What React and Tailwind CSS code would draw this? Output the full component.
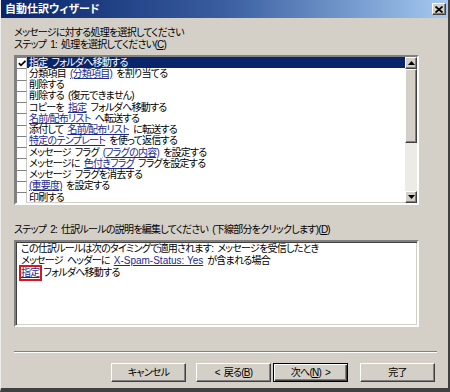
import React from 'react';

const raised =
  'border border-t-white border-l-white border-r-[#404040] border-b-[#404040] shadow-[inset_-1px_-1px_0_#808080] bg-[#d4d0c8]';
const sunken =
  'border-2 border-t-[#808080] border-l-[#808080] border-r-white border-b-white shadow-[inset_1px_1px_0_#404040,inset_-1px_-1px_0_#d4d0c8]';

const Link = ({ children, light, latin }) => (
  <span
    className={`underline underline-offset-1 ${light ? '' : 'text-[#1c2a8c]'} ${latin ? 'tracking-normal [word-spacing:0px]' : ''}`}
  >
    {children}
  </span>
);

const rules = [
  [<Link light key="a">指定</Link>, ' フォルダへ移動する'],
  ['分類項目 ', <Link key="a">(分類項目)</Link>, ' を割り当てる'],
  ['削除する'],
  ['削除する (復元できません)'],
  ['コピーを ', <Link key="a">指定</Link>, ' フォルダへ移動する'],
  [<Link key="a">名前/配布リスト</Link>, ' へ転送する'],
  ['添付して ', <Link key="a">名前/配布リスト</Link>, ' に転送する'],
  [<Link key="a">特定のテンプレート</Link>, ' を使って返信する'],
  ['メッセージ フラグ ', <Link key="a">(フラグの内容)</Link>, ' を設定する'],
  ['メッセージに ', <Link key="a">色付きフラグ</Link>, ' フラグを設定する'],
  ['メッセージ フラグを消去する'],
  [<Link key="a">(重要度)</Link>, ' を設定する'],
  ['印刷する'],
];

const Arrow = ({ down }) => (
  <svg width="7" height="4" viewBox="0 0 7 4">
    {down ? <polygon points="0,0 7,0 3.5,4" fill="#000" /> : <polygon points="0,4 7,4 3.5,0" fill="#000" />}
  </svg>
);

const Button = ({ children, def }) => (
  <div
    className={
      def
        ? 'w-[75px] h-[19px] border border-black bg-[#d4d0c8] shadow-[inset_1px_1px_0_#fff,inset_-1px_-1px_0_#404040,inset_-2px_-2px_0_#808080] flex items-center justify-center'
        : `w-[75px] h-[19px] ${raised} flex items-center justify-center`
    }
  >
    {children}
  </div>
);

export default function App() {
  return (
    <div className="w-[450px] h-[392px] bg-[#d4d0c8] flex flex-col border-l border-l-[#eeeeee] border-r-2 border-r-[#404040] border-b-[4px] border-b-[#404040] text-[10px] leading-[12px] tracking-[-0.75px] [word-spacing:2px] text-black [font-family:'Liberation_Sans','Noto_Sans_CJK_JP',sans-serif] [font-feature-settings:'palt'] overflow-hidden">
      {/* title bar */}
      <div className="h-[18px] shrink-0 flex items-center justify-between bg-gradient-to-r from-[#0a246a] via-[#3a5ea0] to-[#a6caf0] pl-[4px] pr-[2px]">
        <span className="text-white font-bold text-[11px] tracking-normal">自動仕訳ウィザード</span>
        <div className={`w-[14px] h-[12px] ${raised} flex items-center justify-center`}>
          <svg width="8" height="7" viewBox="0 0 8 7">
            <path d="M0.5 0.5 L7.5 6.5 M7.5 0.5 L0.5 6.5" stroke="#000" strokeWidth="1.8" />
          </svg>
        </div>
      </div>

      <div className="pl-[13px] flex flex-col">
        <div className="mt-[9px]">メッセージに対する処理を選択してください</div>
        <div>
          ステップ 1: 処理を選択してください(<span className="underline">C</span>)
        </div>

        {/* rule list */}
        <div className={`mt-[4px] w-[405px] h-[150px] bg-white ${sunken} flex`}>
          <div className="flex-1 flex flex-col">
            {rules.map((r, i) => (
              <div
                key={i}
                className={`h-[11.25px] flex items-center whitespace-pre ${i === 0 ? 'bg-[#0a246a] text-white' : ''}`}
              >
                <div className="w-[11px] h-[11.25px] bg-white border-l border-t border-r border-l-[#808080] border-t-[#808080] border-r-[#c8c8c8] shrink-0 flex items-center justify-center">
                  {i === 0 && (
                    <svg width="8" height="7" viewBox="0 0 8 7">
                      <polyline points="0.8,3.2 3,5.4 7.4,0.8" fill="none" stroke="#000" strokeWidth="1.7" />
                    </svg>
                  )}
                </div>
                <span className="pl-[2px]">{r}</span>
              </div>
            ))}
          </div>
          {/* scrollbar */}
          <div className="w-[12px] flex flex-col bg-[#ecebe6]">
            <div className={`h-[12px] ${raised} flex items-center justify-center`}>
              <Arrow />
            </div>
            <div className={`h-[74px] ${raised}`} />
            <div className="flex-1" />
            <div className={`h-[12px] ${raised} flex items-center justify-center`}>
              <Arrow down />
            </div>
          </div>
        </div>

        <div className="mt-[19px]">
          ステップ 2: 仕訳ルールの説明を編集してください (下線部分をクリックします)(<span className="underline">D</span>)
        </div>

        {/* description */}
        <div className={`mt-[4px] w-[405px] h-[87px] bg-white ${sunken} pl-[5px] pt-[1px] whitespace-pre`}>
          <div>この仕訳ルールは次のタイミングで適用されます: メッセージを受信したとき</div>
          <div>
            メッセージ ヘッダーに <Link latin>X-Spam-Status: Yes</Link> が含まれる場合
          </div>
          <div>
            <span className="inline-block ring-2 ring-[#e0141e]">
              <Link>指定</Link>
            </span>{' '}
            フォルダへ移動する
          </div>
        </div>

        {/* separator */}
        <div className="mt-[24px] w-[423px] h-[2px] border-t border-t-[#808080] border-b border-b-white" />

        {/* buttons */}
        <div className="mt-[10px] flex pl-[97px]">
          <Button>キャンセル</Button>
          <div className="ml-[10px]">
            <Button>
              &lt; 戻る(<span className="underline">B</span>)
            </Button>
          </div>
          <div className="ml-[2px]">
            <Button def>
              次へ(<span className="underline">N</span>) &gt;
            </Button>
          </div>
          <div className="ml-[12px]">
            <Button>完了</Button>
          </div>
        </div>
      </div>
    </div>
  );
}
